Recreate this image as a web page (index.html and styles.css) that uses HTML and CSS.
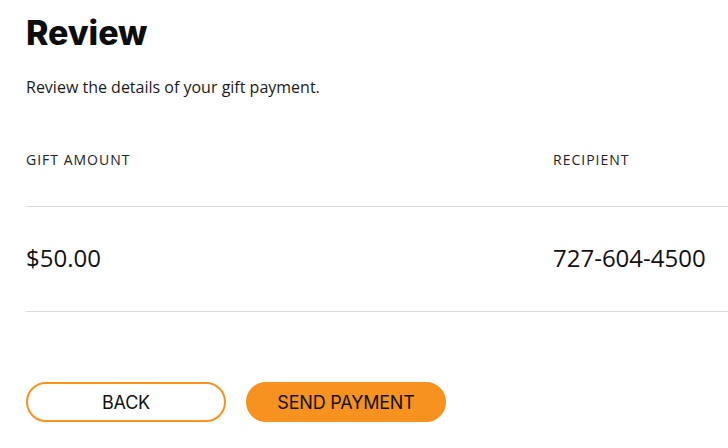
FILE: index.html
```html
<!DOCTYPE html>
<html lang="en">
<head>
<meta charset="utf-8">
<title>Review</title>
<link rel="stylesheet" href="styles.css">
</head>
<body>
<main class="page">
  <h1 class="title">Review</h1>
  <p class="subtitle">Review the details of your gift payment.</p>
  <div class="summary">
    <div class="cell head">GIFT AMOUNT</div>
    <div class="cell head">RECIPIENT</div>
    <div class="cell value">$50.00</div>
    <div class="cell value">727-604-4500</div>
  </div>
  <div class="actions">
    <button class="btn btn-outline" type="button">BACK</button>
    <button class="btn btn-primary" type="button">SEND PAYMENT</button>
  </div>
</main>
</body>
</html>
```

FILE: styles.css
```css
html, body {
  margin: 0;
  padding: 0;
  background: #ffffff;
  overflow: hidden;
}
.page {
  padding-left: 26px;
  font-family: "Open Sans", "Liberation Sans", sans-serif;
  color: #1a1a1a;
}
.title {
  margin: 13px 0 0;
  font-family: Inter, "Liberation Sans", sans-serif;
  font-weight: 800;
  font-size: 34px;
  line-height: 40px;
  letter-spacing: -0.1px;
  color: #0d0d0d;
}
.subtitle {
  margin: 24px 0 0;
  font-size: 16px;
  line-height: 20px;
  color: #1a1a1a;
}
.summary {
  margin-top: 54px;
  display: grid;
  grid-template-columns: 527px 1fr;
}
.cell.head {
  font-size: 14px;
  line-height: 18px;
  letter-spacing: 1px;
  color: #222;
  padding-bottom: 37px;
  border-bottom: 1px solid #dcdcdc;
}
.cell.value {
  font-size: 24px;
  line-height: 30px;
  color: #111;
  padding-top: 36px;
  padding-bottom: 38px;
  border-bottom: 1px solid #dcdcdc;
}
.actions {
  margin-top: 70px;
  display: flex;
  gap: 20px;
}
.btn {
  box-sizing: border-box;
  width: 200px;
  height: 40px;
  border-radius: 20px;
  font-family: Inter, "Liberation Sans", sans-serif;
  font-size: 18px;
  font-weight: 400;
  color: #111;
  letter-spacing: -0.2px;
  cursor: pointer;
  padding: 0;
}
.btn-outline {
  background: #ffffff;
  border: 2px solid #f7931e;
}
.btn-primary {
  background: #f7911f;
  border: 2px solid #f7911f;
}
```
